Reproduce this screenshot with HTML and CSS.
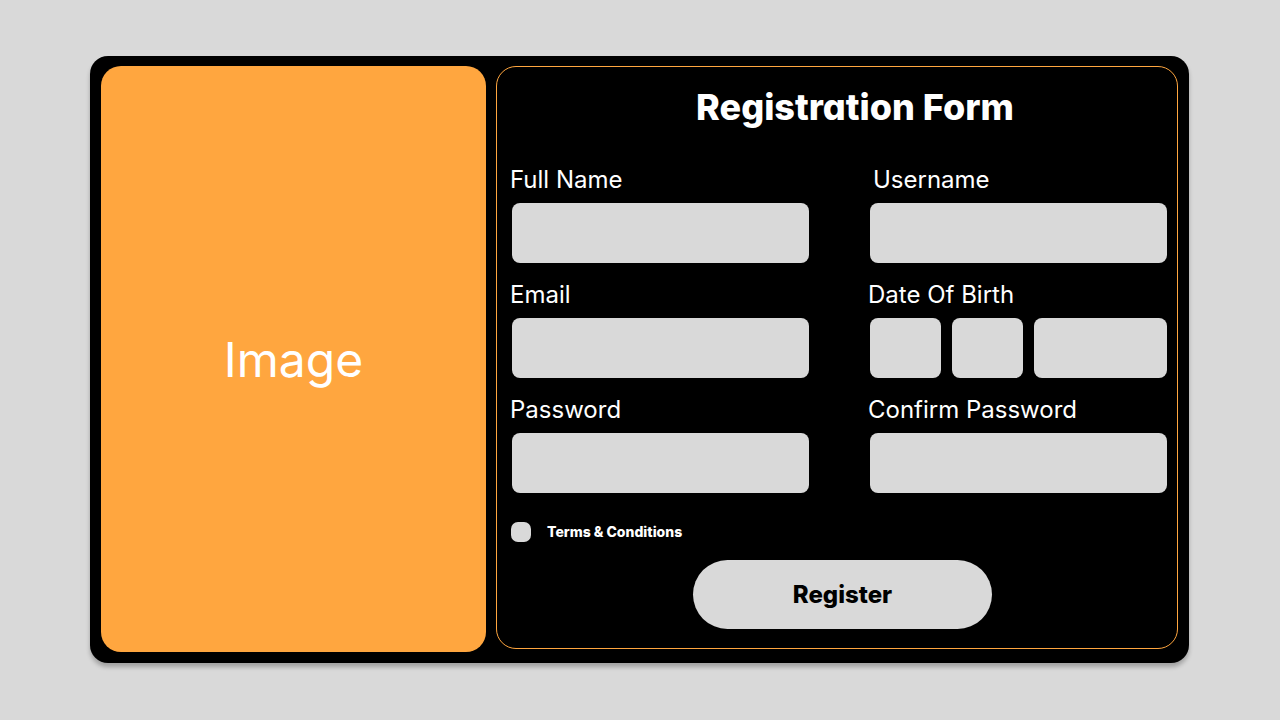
FILE: index.html
```html
<!DOCTYPE html>
<html lang="en">
<head>
<meta charset="utf-8">
<meta name="viewport" content="width=device-width, initial-scale=1">
<title>Registration Form</title>
<link rel="stylesheet" href="styles.css">
</head>
<body>
<main class="card">
  <div class="picture">Image</div>
  <form class="panel">
    <h1 class="title">Registration Form</h1>
    <div class="fields">
      <div class="field">
        <label for="fullname">Full Name</label>
        <input class="box" id="fullname" type="text">
      </div>
      <div class="field field-inset">
        <label for="username">Username</label>
        <input class="box" id="username" type="text">
      </div>
      <div class="field">
        <label for="email">Email</label>
        <input class="box" id="email" type="email">
      </div>
      <div class="field">
        <label for="day">Date Of Birth</label>
        <div class="date">
          <input class="box" id="day" type="text" aria-label="Date Of Birth, day">
          <input class="box" type="text" aria-label="Date Of Birth, month">
          <input class="box" type="text" aria-label="Date Of Birth, year">
        </div>
      </div>
      <div class="field">
        <label for="password">Password</label>
        <input class="box" id="password" type="password">
      </div>
      <div class="field">
        <label for="confirm">Confirm Password</label>
        <input class="box" id="confirm" type="password">
      </div>
    </div>
    <div class="terms">
      <input class="tick" id="terms" type="checkbox">
      <label for="terms">Terms &amp; Conditions</label>
    </div>
    <button class="register" type="submit">Register</button>
  </form>
</main>
</body>
</html>
```
FILE: styles.css
```css
* {
  box-sizing: border-box;
}

body {
  margin: 0;
  min-height: 100vh;
  padding: 56px 91px 57px 90px;
  display: flex;
  background: #d9d9d9;
  color: #fff;
  font-family: Inter, "Liberation Sans", sans-serif;
}

.card {
  flex: 1;
  display: grid;
  grid-template-columns: 385fr 682fr;
  gap: 10px;
  padding: 10px 11px 11px;
  border-radius: 18px;
  background: #000;
  box-shadow: 0 4px 4px rgba(0, 0, 0, 0.25);
}

.picture {
  display: flex;
  align-items: center;
  justify-content: center;
  border-radius: 20px;
  background: #ffa63f;
  font-size: 48px;
}

.panel {
  min-width: 0;
  display: flex;
  flex-direction: column;
  margin-bottom: 3px;
  padding: 16px 10px 19px 15px;
  border: 1px solid #ffa63f;
  border-radius: 20px;
}

.title,
.terms,
.register {
  font-family: Inter, sans-serif;
  font-feature-settings: "cv11";
  font-weight: 800;
}

.title {
  margin: 0 0 34px 31px;
  text-align: center;
  font-size: 36px;
  line-height: 48px;
}

.fields {
  display: grid;
  grid-template-columns: 1fr 1fr;
  gap: 17px 61px;
}

.field {
  min-width: 0;
}

.field label {
  display: block;
  margin: 0 0 8px -2px;
  font-size: 24px;
  line-height: 30px;
}

.field-inset label {
  padding-left: 5px;
}

.box {
  display: block;
  width: 100%;
  min-width: 0;
  height: 60px;
  margin: 0;
  padding: 0 12px;
  border: 0;
  border-radius: 8px;
  background: #d9d9d9;
  font: inherit;
  font-size: 24px;
}

.date {
  display: grid;
  grid-template-columns: 71fr 71fr 133fr;
  gap: 11px;
}

.terms {
  display: flex;
  align-items: center;
  gap: 16px;
  margin: 29px 0 18px -1px;
  font-size: 14px;
  line-height: 20px;
}

.tick {
  appearance: none;
  width: 20px;
  height: 20px;
  margin: 0;
  border-radius: 7px;
  background: #d9d9d9;
}

.tick:checked {
  box-shadow: inset 0 0 0 5px #d9d9d9;
  background: #000;
}

.register {
  align-self: center;
  width: 299px;
  height: 69px;
  margin-left: 6px;
  border: 0;
  border-radius: 35px;
  background: #d9d9d9;
  color: #000;
  font-size: 24px;
}
```
